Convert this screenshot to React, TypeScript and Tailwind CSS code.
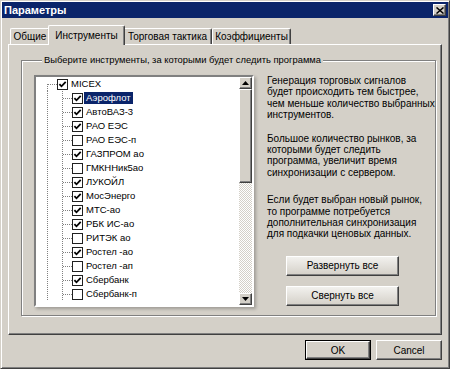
import React from "react";

type Item = { name: string; checked: boolean; selected?: boolean };

const items: Item[] = [
  { name: "Аэрофлот", checked: true, selected: true },
  { name: "АвтоВАЗ-3", checked: true },
  { name: "РАО ЕЭС", checked: true },
  { name: "РАО ЕЭС-п", checked: false },
  { name: "ГАЗПРОМ ао", checked: true },
  { name: "ГМКННик5ао", checked: false },
  { name: "ЛУКОЙЛ", checked: true },
  { name: "МосЭнерго", checked: true },
  { name: "МТС-ао", checked: true },
  { name: "РБК ИС-ао", checked: true },
  { name: "РИТЭК ао", checked: false },
  { name: "Ростел -ао", checked: true },
  { name: "Ростел -ап", checked: false },
  { name: "Сбербанк", checked: true },
  { name: "Сбербанк-п", checked: false },
];

// classic raised 3d edge
const raised =
  "border border-t-white border-l-white border-r-[#404040] border-b-[#404040] shadow-[inset_-1px_-1px_#808080]";

const CheckBox = ({ checked }: { checked: boolean }) => (
  <span className="flex h-[11px] w-[11px] shrink-0 items-center justify-center border border-[#202020] bg-white">
    {checked && (
      <svg width="9" height="9" viewBox="0 0 9 9">
        <path d="M1.4 4.1 L3.5 6.3 L7.7 1.9" fill="none" stroke="#000" strokeWidth="1.8" />
      </svg>
    )}
  </span>
);

const dots = { stroke: "#808080", strokeDasharray: "1 1", fill: "none" };

const RowLines = ({ root }: { root?: boolean }) =>
  root ? (
    <svg width="21" height="14" className="shrink-0">
      <path d="M11.5 7 V14" {...dots} />
      <path d="M12 7.5 H21" {...dots} />
    </svg>
  ) : (
    <svg width="36" height="14" className="shrink-0">
      <path d="M11.5 0 V14" {...dots} />
      <path d="M26.5 0 V14" {...dots} />
      <path d="M27 7.5 H36" {...dots} />
    </svg>
  );

const Arrow = ({ down }: { down?: boolean }) => (
  <svg width="7" height="4" viewBox="0 0 7 4">
    <polygon points={down ? "0,0 7,0 3.5,4" : "0,4 7,4 3.5,0"} fill="#000" />
  </svg>
);

const App: React.FC = () => {
  return (
    <div className="flex h-[369px] w-[450px] flex-col border border-t-[#d4d0c8] border-l-[#d4d0c8] border-r-[#404040] border-b-[#404040] bg-[#d4d0c8] p-[1px] font-['Liberation_Sans',Arial,sans-serif] text-[10px] text-black shadow-[inset_1px_1px_#fff,inset_-1px_-1px_#808080]">
      {/* Title bar */}
      <div className="flex h-[16px] shrink-0 items-center justify-between bg-[#0a246a] pl-[2px] pr-[2px]">
        <span className="text-[11px] font-bold leading-none text-white">Параметры</span>
        <button className={`flex h-[12px] w-[13px] items-center justify-center bg-[#d4d0c8] ${raised}`}>
          <svg width="8" height="7" viewBox="0 0 8 7">
            <path d="M0.5 0.5 L7.5 6.5 M7.5 0.5 L0.5 6.5" stroke="#000" strokeWidth="1.5" />
          </svg>
        </button>
      </div>

      {/* Tabs */}
      <div className="mx-[6px] mt-[7px] flex h-[19px] shrink-0 items-end pl-[2px]">
        <div className="flex h-[16px] w-[40px] items-center justify-center rounded-t-[2px] border border-b-0 border-t-white border-l-white border-r-[#404040] shadow-[inset_-1px_0_#808080]">
          Общие
        </div>
        <div className="relative z-10 -mx-[2px] -mb-[1px] flex h-[20px] w-[77px] items-start justify-center rounded-t-[2px] border border-b-0 border-t-white border-l-white border-r-[#404040] bg-[#d4d0c8] pt-[2px] shadow-[inset_-1px_0_#808080]">
          Инструменты
        </div>
        <div className="flex h-[16px] w-[89px] items-center justify-center rounded-t-[2px] border border-b-0 border-t-white border-l-white border-r-[#404040] shadow-[inset_-1px_0_#808080]">
          Торговая тактика
        </div>
        <div className="flex h-[16px] w-[79px] items-center justify-center rounded-t-[2px] border border-b-0 border-t-white border-l-white border-r-[#404040] shadow-[inset_-1px_0_#808080]">
          Коэффициенты
        </div>
      </div>

      {/* Tab panel */}
      <div className={`mx-[6px] h-[291px] shrink-0 ${raised}`}>
        <fieldset className="ml-[12px] mt-[9px] h-[262px] w-[412px] border border-[#808080] pl-[12px] pt-[9px] shadow-[inset_1px_1px_#fff,1px_1px_#fff]">
          <legend className="ml-[8px] bg-[#d4d0c8] px-[2px] text-[9.4px] leading-[12px]">
            Выберите инструменты, за которыми будет следить программа
          </legend>

          <div className="flex">
            {/* Tree view */}
            <div className="flex h-[232px] w-[220px] shrink-0 border-2 border-t-[#808080] border-l-[#808080] border-r-white border-b-white shadow-[inset_1px_1px_#404040,inset_-1px_-1px_#d4d0c8,2px_2px_3px_rgba(0,0,0,0.25)]">
              <div className="flex-1 overflow-hidden bg-white text-[9.5px]">
                <div className="flex h-[14px] items-center">
                  <RowLines root />
                  <CheckBox checked />
                  <span className="ml-[1px] px-[2px] leading-[12px]">MICEX</span>
                </div>
                {items.map((it) => (
                  <div key={it.name} className="flex h-[14px] items-center">
                    <RowLines />
                    <CheckBox checked={it.checked} />
                    <span
                      className={
                        it.selected
                          ? "ml-[1px] bg-[#0a246a] px-[2px] leading-[12px] text-white"
                          : "ml-[1px] px-[2px] leading-[12px]"
                      }
                    >
                      {it.name}
                    </span>
                  </div>
                ))}
              </div>
              {/* Scrollbar */}
              <div className="flex w-[13px] shrink-0 flex-col">
                <div className={`flex h-[12px] items-center justify-center bg-[#d4d0c8] ${raised}`}>
                  <Arrow />
                </div>
                <div className={`h-[94px] bg-[#d4d0c8] ${raised}`} />
                <div className="flex-1 bg-[repeating-conic-gradient(#fff_0_25%,#d4d0c8_0_50%)] bg-[length:2px_2px]" />
                <div className={`flex h-[12px] items-center justify-center bg-[#d4d0c8] ${raised}`}>
                  <Arrow down />
                </div>
              </div>
            </div>

            {/* Help text and buttons */}
            <div className="ml-[13px] flex flex-col whitespace-nowrap leading-[11.4px]">
              <p>
                Генерация торговых сигналов
                <br />
                будет происходить тем быстрее,
                <br />
                чем меньше количество выбранных
                <br />
                инструментов.
              </p>
              <p className="mt-[12px]">
                Большое количество рынков, за
                <br />
                которыми будет следить
                <br />
                программа, увеличит время
                <br />
                синхронизации с сервером.
              </p>
              <p className="mt-[16px]">
                Если будет выбран новый рынок,
                <br />
                то программе потребуется
                <br />
                дополнительная синхронизация
                <br />
                для подкачки ценовых данных.
              </p>
              <button
                className={`ml-[19px] mt-[16px] h-[20px] w-[113px] bg-gradient-to-b from-[#f2f1ee] to-[#d4d0c8] ${raised} shadow-[inset_-1px_-1px_#808080,3px_3px_3px_rgba(0,0,0,0.25)]`}
              >
                Развернуть все
              </button>
              <button
                className={`ml-[19px] mt-[10px] h-[20px] w-[113px] bg-gradient-to-b from-[#f2f1ee] to-[#d4d0c8] ${raised} shadow-[inset_-1px_-1px_#808080,3px_3px_3px_rgba(0,0,0,0.25)]`}
              >
                Свернуть все
              </button>
            </div>
          </div>
        </fieldset>
      </div>

      {/* Dialog buttons */}
      <div className="mr-[6px] mt-[5px] flex justify-end gap-[5px]">
        <div className="h-[20px] w-[66px] border border-black">
          <button className={`h-full w-full bg-[#d4d0c8] ${raised} shadow-[inset_-1px_-1px_#808080,2px_2px_3px_rgba(0,0,0,0.2)]`}>
            OK
          </button>
        </div>
        <button className={`h-[20px] w-[66px] bg-[#d4d0c8] ${raised} shadow-[inset_-1px_-1px_#808080,2px_2px_3px_rgba(0,0,0,0.2)]`}>
          Cancel
        </button>
      </div>
    </div>
  );
};

export default App;
